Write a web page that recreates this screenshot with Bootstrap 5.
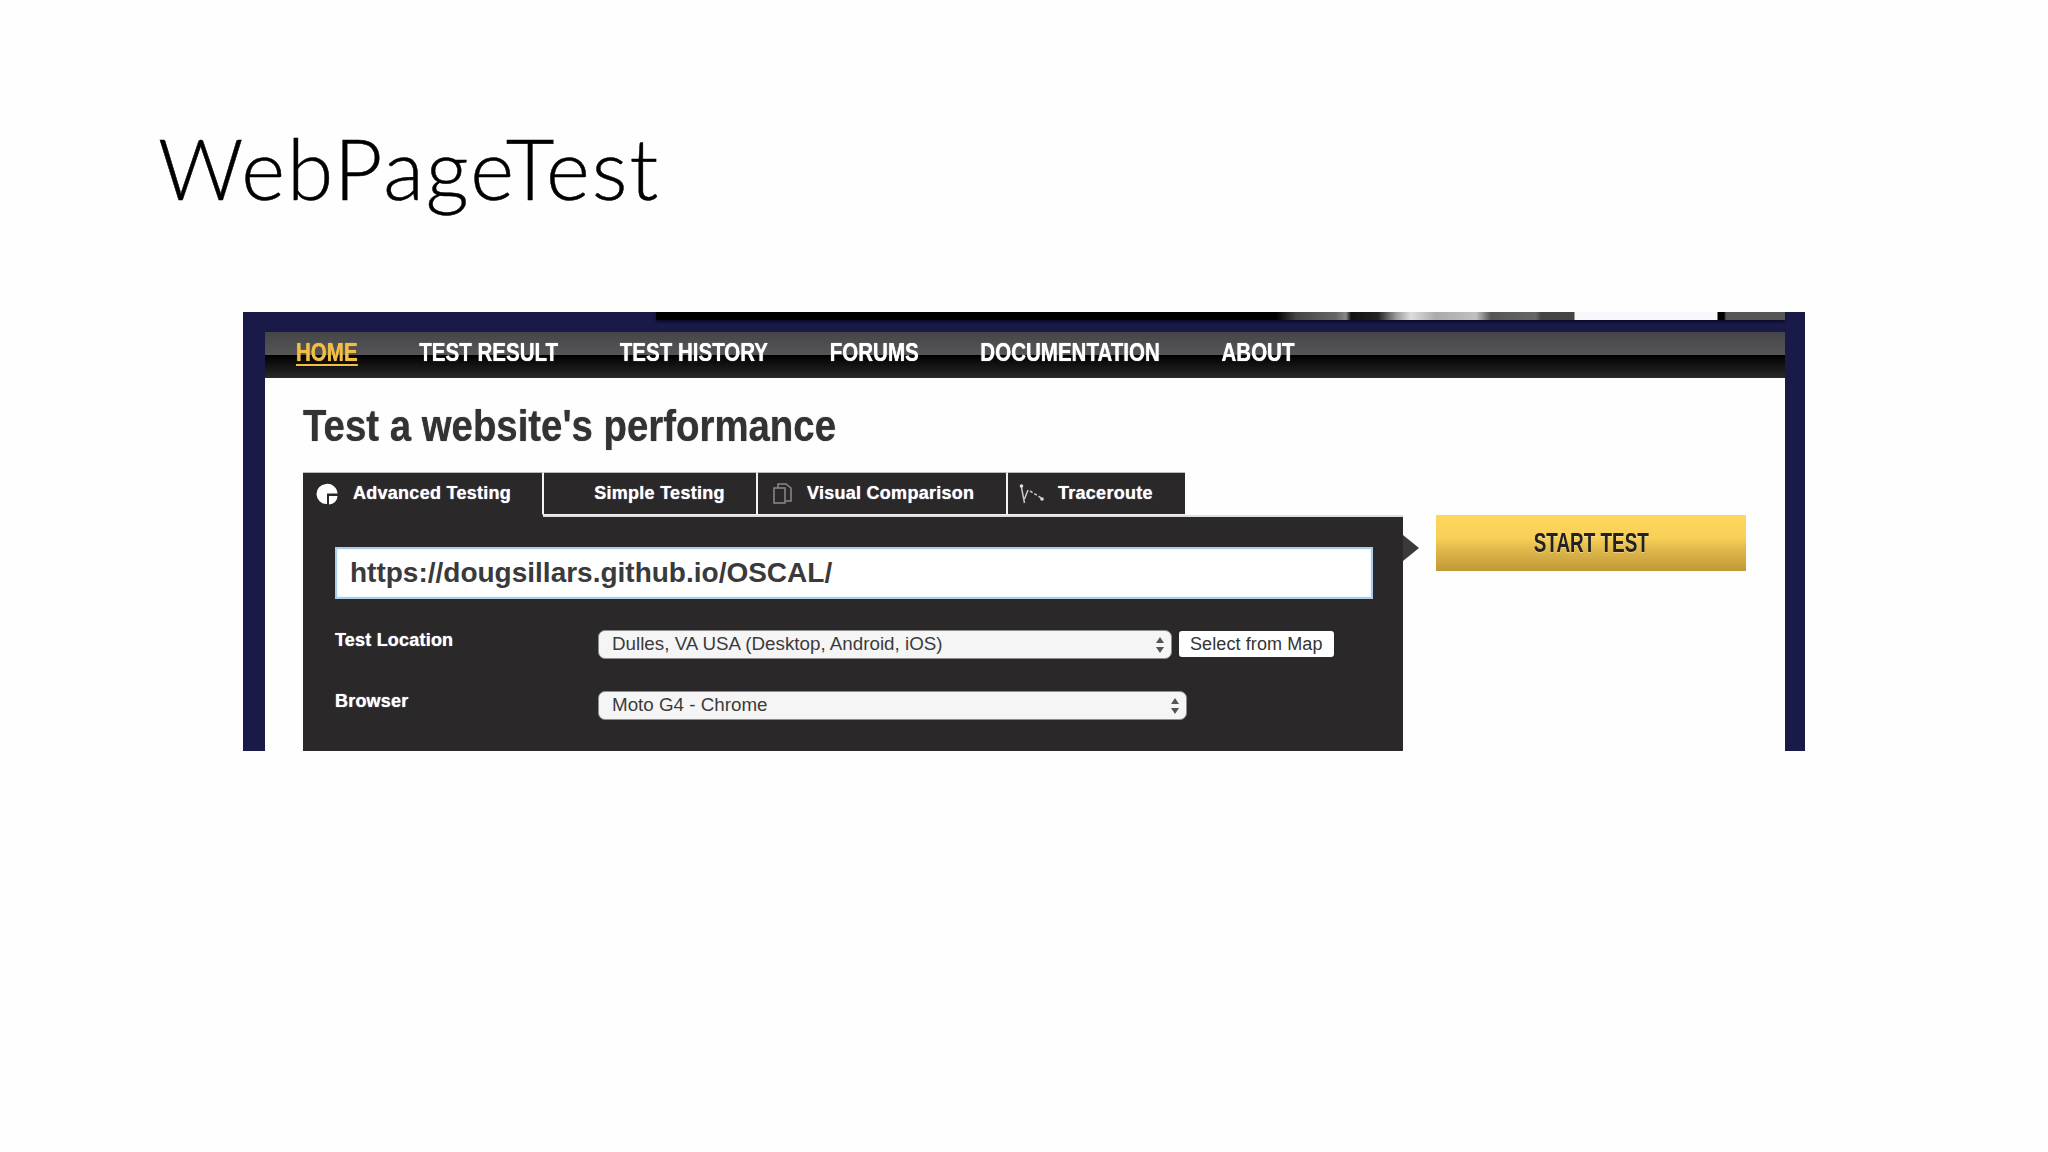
<!DOCTYPE html>
<html lang="en">
<head>
<meta charset="utf-8">
<title>WebPageTest</title>
<link rel="stylesheet" href="https://cdn.jsdelivr.net/npm/bootstrap@5.3.0/dist/css/bootstrap.min.css">
<style>
html,body{height:100%;background:#fefefe;}
body{width:2048px;height:1152px;overflow:hidden;font-family:"Liberation Sans",Arial,sans-serif;}
.slide-title{font-family:Lato,"Open Sans",sans-serif;font-weight:300;font-size:84px;line-height:1;color:#000;margin:0;padding:126px 0 0 158px;height:312px;letter-spacing:2px;-webkit-text-stroke:.5px #000;}
.shot{width:1562px;height:439px;margin-left:243px;background:#1a1a48;padding:0 20px 0 22px;overflow:hidden;}
.strip{height:20px;display:flex;}
.strip-fade{height:8px;width:100%;margin-left:391px;box-shadow:0 2px 3px #0a0a28;background:linear-gradient(90deg,#000 0,#000 620px,#444 640px,#666 680px,#888 690px,#111 695px,#222 722px,#999 740px,#ddd 755px,#aaa 780px,#c0c0c0 820px,#555 835px,#666 880px,#444 885px,#444 918px,#f8f8fc 919px,#f8f8fc 1061px,#000 1062px,#000 1068px,#555 1070px,#555 100%);}
.topnav{height:46px;background:linear-gradient(180deg,#464648 0,#555557 50%,#000 50%,#111 70%,#2a2a2a 100%);padding:0;align-items:flex-start;flex-wrap:nowrap;justify-content:flex-start;gap:0;}
.nav-squeeze{display:flex;margin-left:31px;transform:scaleX(.79);transform-origin:0 0;}
.topnav .nav-link{font-size:26px;line-height:1;font-weight:700;color:#fff;padding:7px 0 0;margin-right:78px;white-space:nowrap;text-shadow:0 0 1px #fff;}
.topnav .nav-link.sel{color:#f2be45;text-shadow:0 0 1px #f2be45;text-decoration:underline;text-underline-offset:3px;text-decoration-thickness:2px;}
.body-area{background:#fefefe;height:373px;padding:0 0 0 38px;}
.head-line{font-size:44px;line-height:1;font-weight:700;color:#333;margin:0;padding:26px 0 0;height:94px;white-space:nowrap;transform:scaleX(.872);transform-origin:0 0;text-shadow:0 0 1px #555;}
.tabs-row{height:44px;flex-wrap:nowrap;}
.tabs-row .nav-link{height:44px;background:#2a2829;color:#fff;font-size:18px;font-weight:700;border-radius:0;padding:0;display:flex;align-items:center;border-top:1px solid #bbb;border-right:2px solid #f2f2f2;border-bottom:2px solid #f2f2f2;white-space:nowrap;letter-spacing:.27px;text-shadow:0 0 1px #dde;}
.tabs-row .nav-link:hover,.tabs-row .nav-link:focus{color:#fff;}
.tab-a{width:241px;padding-left:13px!important;gap:15px;border-bottom-color:#2a2829!important;}
.tab-b{width:214px;justify-content:center;padding-left:19px!important;}
.tab-c{width:250px;padding-left:15px!important;gap:14px;}
.tab-d{width:177px;padding-left:11px!important;gap:14px;border-right:0!important;}
.panel{width:1100px;height:235px;background:#2a2829;padding:31px 32px 0;position:relative;}
.panel-edge{position:absolute;top:-1px;left:240px;right:0;height:2px;background:#dedede;}
.panel-tip{position:absolute;left:100%;top:19px;width:0;height:0;border-style:solid;border-width:13px 0 13px 16px;border-color:transparent transparent transparent #3a3a3d;}
.url-box.form-control{width:1038px;height:52px;border-radius:0;border:2px solid #a9cfee;box-shadow:inset 0 0 2px #cfe4f6;background:#fff;font-size:28px;font-weight:700;color:#3a3a3a;padding:0 13px;}
.url-box.form-control:focus{box-shadow:none;color:#3a3a3a;}
.form-line{margin-top:31px;height:29px;align-items:flex-start;}
.form-line + .form-line{margin-top:32px;}
.form-line label{width:263px;flex:none;color:#fff;font-size:18px;font-weight:700;line-height:1;margin-top:1px;letter-spacing:.2px;text-shadow:0 0 1px #dde;}
.pick.form-select{height:29px;padding:0 0 2px 13px;font-size:18.800px;line-height:25px;color:#3b3b3b;background-color:#f6f5f6;border:1px solid #8d8d8d;border-radius:7px;font-family:"Liberation Sans",sans-serif;box-shadow:none;background-image:url("data:image/svg+xml,%3Csvg xmlns='http://www.w3.org/2000/svg' viewBox='0 0 10 18'%3E%3Cpath d='M5 1l4 6H1zM5 17l4-6H1z' fill='%23555'/%3E%3C/svg%3E");background-repeat:no-repeat;background-size:10px 18px;background-position:right 6px center;}
.pick-a{width:574px;}
.pick-b{width:589px;}
.map-btn.btn{height:26px;margin-left:7px;padding:0 11px;background:#fff;color:#333;border:0;border-radius:3px;font-size:18px;line-height:26px;margin-top:1px;white-space:nowrap;letter-spacing:.1px;}
.side-col{margin-left:33px;padding-top:43px;}
.go-btn.btn{display:block;width:310px;height:56px;border:0;border-radius:0;background:linear-gradient(180deg,#ffd75f 0,#f8d058 40%,#deb549 65%,#bf993a 100%);color:#222;font-size:27px;font-weight:700;line-height:54px;padding:0;}
.go-label{display:inline-block;transform:scaleX(.7);text-shadow:0 1px 0 rgba(255,255,255,.35);}
.tab-ico{flex:none;display:block;}
</style>
</head>
<body>
<h1 class="slide-title">WebPageTest</h1>
<div class="shot">
  <div class="strip"><div class="strip-fade"></div></div>
  <nav class="navbar topnav">
    <div class="nav-squeeze">
      <a class="nav-link sel" href="#">HOME</a>
      <a class="nav-link" href="#">TEST RESULT</a>
      <a class="nav-link" href="#">TEST HISTORY</a>
      <a class="nav-link" href="#">FORUMS</a>
      <a class="nav-link" href="#">DOCUMENTATION</a>
      <a class="nav-link" href="#">ABOUT</a>
    </div>
  </nav>
  <div class="body-area">
    <h2 class="head-line">Test a website's performance</h2>
    <div class="d-flex">
      <div>
        <ul class="nav tabs-row">
          <li class="nav-item"><a class="nav-link tab-a" href="#">
            <svg class="tab-ico" width="22" height="22" viewBox="0 0 22 22"><path d="M10 1a10 10 0 1 0 1 20V10.500h10.500A10 10 0 0 0 10 1z" fill="#fff"/><path d="M13 13h8.500a8.500 8.500 0 0 1-8.500 8.500z" fill="#fff"/></svg>
            Advanced Testing</a></li>
          <li class="nav-item"><a class="nav-link tab-b" href="#">Simple Testing</a></li>
          <li class="nav-item"><a class="nav-link tab-c" href="#">
            <svg class="tab-ico" width="20" height="21" viewBox="0 0 20 21"><path d="M1 5h11v15H1zM5 5V1h8l5 4v13h-5" fill="none" stroke="#8a8a8a" stroke-width="1.500"/></svg>
            Visual Comparison</a></li>
          <li class="nav-item"><a class="nav-link tab-d" href="#">
            <svg class="tab-ico" width="25" height="22" viewBox="0 0 25 22"><path d="M2 2l3.500 18M9 7l-3.500 9" fill="none" stroke="#c8c8c8" stroke-width="1.500"/><path d="M11 8l13 8" fill="none" stroke="#c8c8c8" stroke-width="1.500" stroke-dasharray="3 2"/><circle cx="2.500" cy="3" r="1.800" fill="#ddd"/><circle cx="23" cy="16" r="1.800" fill="#ddd"/></svg>
            Traceroute</a></li>
        </ul>
        <div class="panel">
          <div class="panel-edge"></div>
          <div class="panel-tip"></div>
          <input class="form-control url-box" type="text" value="https://dougsillars.github.io/OSCAL/">
          <div class="d-flex form-line">
            <label>Test Location</label>
            <select class="form-select pick pick-a"><option>Dulles, VA USA (Desktop, Android, iOS)</option></select>
            <button class="btn map-btn" type="button">Select from Map</button>
          </div>
          <div class="d-flex form-line">
            <label>Browser</label>
            <select class="form-select pick pick-b"><option>Moto G4 - Chrome</option></select>
          </div>
        </div>
      </div>
      <div class="side-col"><button class="btn go-btn" type="button"><span class="go-label">START TEST</span></button></div>
    </div>
  </div>
</div>
<script src="https://cdn.jsdelivr.net/npm/bootstrap@5.3.0/dist/js/bootstrap.bundle.min.js"></script>
</body>
</html>
